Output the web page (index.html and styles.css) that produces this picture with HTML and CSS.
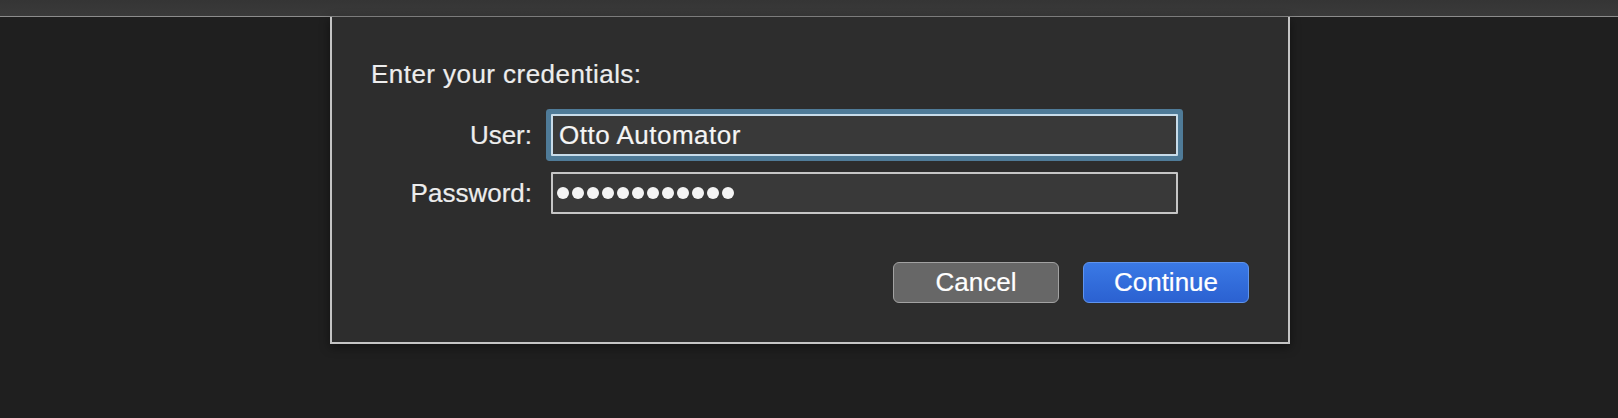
FILE: index.html
```html
<!DOCTYPE html>
<html lang="en">
<head>
    <meta charset="UTF-8">
    <title>Enter your credentials</title>
    <link rel="stylesheet" href="styles.css">
</head>
<body>
    <div class="titlebar"></div>

    <div class="sheet">
        <p class="prompt">Enter your credentials:</p>

        <div class="form">
            <label class="label">User:</label>
            <div class="field focused">Otto Automator</div>

            <label class="label">Password:</label>
            <div class="field secure">
                <span class="dot"></span><span class="dot"></span><span class="dot"></span>
                <span class="dot"></span><span class="dot"></span><span class="dot"></span>
                <span class="dot"></span><span class="dot"></span><span class="dot"></span>
                <span class="dot"></span><span class="dot"></span><span class="dot"></span>
            </div>
        </div>

        <div class="buttons">
            <button class="btn">Cancel</button>
            <button class="btn primary">Continue</button>
        </div>
    </div>
</body>
</html>
```

FILE: styles.css
```css
* {
    margin: 0;
    padding: 0;
    box-sizing: border-box;
}

body {
    font-family: 'Liberation Sans', Arial, sans-serif;
    font-size: 26px;
    background: #1f1f1f;
    color: #ededed;
    height: 418px;
    overflow: hidden;
    -webkit-text-stroke: 0.2px currentColor;
}

.titlebar {
    height: 17px;
    background: linear-gradient(#353535, #3a3a3a);
    border-bottom: 1px solid #8c8c8c;
}

.sheet {
    width: 960px;
    margin-left: calc(50% - 479px);
    background: #2d2d2d;
    border: 2px solid #c4c4c4;
    border-top: none;
    padding: 41px 39px 39px;
    box-shadow: 0 3px 10px rgba(0, 0, 0, 0.45);
}

.prompt {
    line-height: 32px;
    letter-spacing: 0.45px;
}

.form {
    display: grid;
    grid-template-columns: 161px 627px;
    column-gap: 19px;
    row-gap: 16px;
    margin-top: 24px;
}

.label {
    text-align: right;
    line-height: 42px;
}

.field {
    height: 42px;
    line-height: 38px;
    background: #393939;
    border: 2px solid #c6c6c6;
    border-radius: 1px;
    padding: 0 6px;
    color: #f5f5f5;
    letter-spacing: 0.5px;
}

.field.focused {
    border-color: #c8dcea;
    box-shadow: 0 0 0 5px #4f7b98;
}

.field.secure {
    display: flex;
    align-items: center;
    gap: 3px;
    padding-left: 4px;
}

.dot {
    width: 12px;
    height: 12px;
    border-radius: 50%;
    background: #f4f4f4;
}

.buttons {
    display: flex;
    justify-content: flex-end;
    gap: 24px;
    margin-top: 48px;
}

.btn {
    width: 166px;
    height: 41px;
    font-family: inherit;
    font-size: 26px;
    line-height: 39px;
    color: #fff;
    background: #676767;
    border: 1px solid #a2a2a2;
    border-radius: 6px;
    -webkit-text-stroke: 0.2px #fff;
}

.btn.primary {
    background: linear-gradient(#3a79e5, #2b61d1);
    border-color: #5f94ee;
}
```
